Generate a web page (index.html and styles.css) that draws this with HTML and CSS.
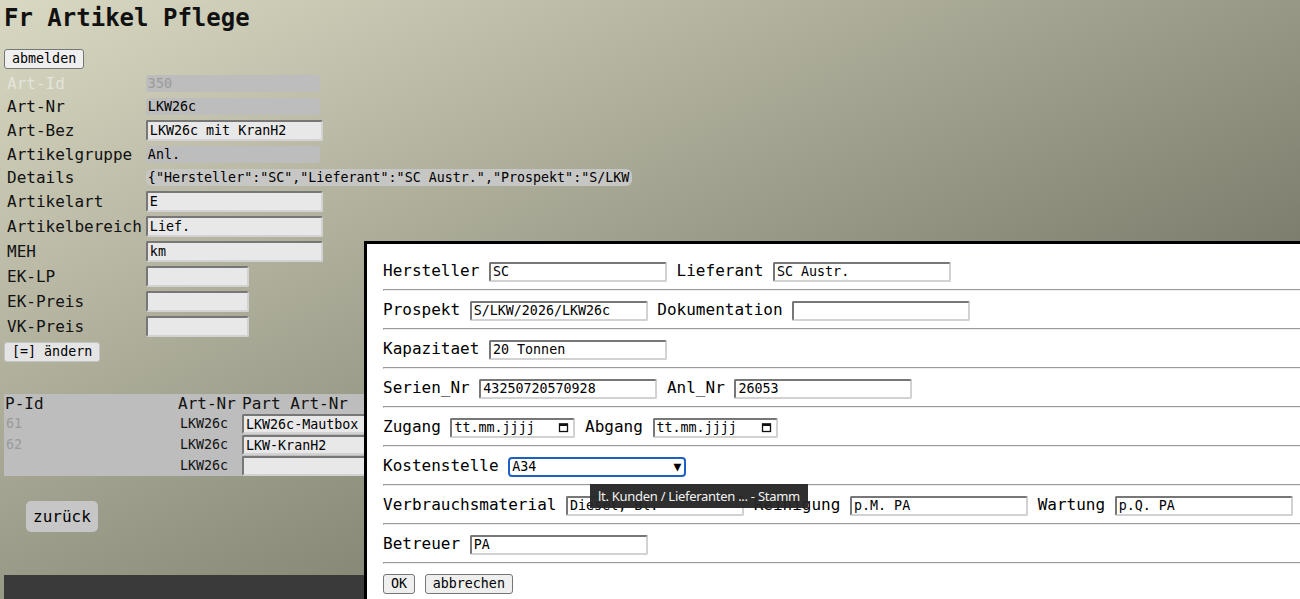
FILE: index.html
```html
<!DOCTYPE html>
<html lang="de">
<head>
    <meta charset="UTF-8">
    <meta name="viewport" content="width=device-width, initial-scale=1.0">
    <title>Fr Artikel Pflege</title>
    <link rel="stylesheet" href="styles.css">
</head>
<body>

    <h1>Fr Artikel Pflege</h1>
    <button class="btn">abmelden</button>

    <table class="form">
        <tr><td class="off">Art-Id</td><td><input class="ro dim" value="350" readonly></td></tr>
        <tr><td>Art-Nr</td><td><input class="ro" value="LKW26c" readonly></td></tr>
        <tr><td>Art-Bez</td><td><input class="edit" value="LKW26c mit KranH2"></td></tr>
        <tr><td>Artikelgruppe</td><td><input class="ro" value="Anl." readonly></td></tr>
        <tr><td>Details</td><td><input class="ro wide" value='{"Hersteller":"SC","Lieferant":"SC Austr.","Prospekt":"S/LKW/2026/LKW26c"}' readonly></td></tr>
        <tr><td>Artikelart</td><td><input class="edit" value="E"></td></tr>
        <tr><td>Artikelbereich</td><td><input class="edit" value="Lief."></td></tr>
        <tr><td>MEH</td><td><input class="edit" value="km"></td></tr>
        <tr><td>EK-LP</td><td><input class="edit short" value=""></td></tr>
        <tr><td>EK-Preis</td><td><input class="edit short" value=""></td></tr>
        <tr><td>VK-Preis</td><td><input class="edit short" value=""></td></tr>
    </table>
    <button class="btn light">[=] ändern</button>

    <!-- Stueckliste -->
    <div class="parts">
        <table>
            <tr><th class="pid">P-Id</th><th class="anr">Art-Nr</th><th>Part Art-Nr</th></tr>
            <tr><td class="id">61</td><td class="nr">LKW26c</td><td><input class="edit" value="LKW26c-Mautbox"></td></tr>
            <tr><td class="id">62</td><td class="nr">LKW26c</td><td><input class="edit" value="LKW-KranH2"></td></tr>
            <tr><td class="id"></td><td class="nr">LKW26c</td><td><input class="edit" value=""></td></tr>
        </table>
    </div>

    <button class="back">zurück</button>
    <div class="footer"></div>

    <!-- Details Dialog -->
    <div class="dialog">
        <div class="row">Hersteller <input value="SC"> Lieferant <input value="SC Austr."></div>
        <hr>
        <div class="row">Prospekt <input value="S/LKW/2026/LKW26c"> Dokumentation <input value=""></div>
        <hr>
        <div class="row">Kapazitaet <input value="20 Tonnen"></div>
        <hr>
        <div class="row">Serien_Nr <input value="43250720570928"> Anl_Nr <input value="26053"></div>
        <hr>
        <div class="row">Zugang <span class="date">tt.mm.jjjj <svg width="11" height="11" viewBox="0 0 11 11"><rect x="1.5" y="2" width="8" height="7.5" fill="none" stroke="#111" stroke-width="1.3"/><rect x="1" y="1.5" width="9" height="2.5" fill="#111"/></svg></span> Abgang <span class="date">tt.mm.jjjj <svg width="11" height="11" viewBox="0 0 11 11"><rect x="1.5" y="2" width="8" height="7.5" fill="none" stroke="#111" stroke-width="1.3"/><rect x="1" y="1.5" width="9" height="2.5" fill="#111"/></svg></span></div>
        <hr>
        <div class="row">Kostenstelle <span class="pick"><select><option>A34</option><option>A35</option></select><span class="arrow">▼</span></span></div>
        <hr>
        <div class="row">Verbrauchsmaterial <input value="Diesel, Bl."> Reinigung <input value="p.M. PA"> Wartung <input value="p.Q. PA"></div>
        <hr>
        <div class="row">Betreuer <input value="PA"></div>
        <hr>
        <div class="row"><button class="btn inl">OK</button> <button class="btn inl">abbrechen</button></div>
    </div>

    <div class="tooltip">lt. Kunden / Lieferanten ... - Stamm</div>

</body>
</html>
```

FILE: styles.css
```css
html, body {
    margin: 0;
    height: 100%;
    overflow: hidden;
}

body {
    position: relative;
    box-sizing: border-box;
    padding: 4px;
    font-family: "DejaVu Sans Mono", monospace;
    font-size: 16px;
    color: #111;
    background: linear-gradient(to bottom right, #d9d9c3, #57574a);
}

h1 {
    font-size: 24px;
    line-height: 28px;
    margin: 0 0 17px;
}

input, select, button {
    font-family: "DejaVu Sans Mono", monospace;
    font-size: 13.33px;
    color: #000;
}

.btn {
    display: block;
    height: 20px;
    padding: 0 7px;
    line-height: 16px;
    background: #efefef;
    border: 1px solid #767676;
    border-radius: 3px;
}

.btn.light {
    margin-top: 2px;
    background: #e4e4e4;
    border-color: #c4c4c4;
}

.btn.inl {
    display: inline-block;
    padding: 0 7px;
    vertical-align: middle;
}

/* Artikel Formular */
.form {
    border-spacing: 2px;
    margin-top: 2px;
}

.form td {
    padding: 1px;
    line-height: 19px;
    vertical-align: middle;
}

.form td.off {
    color: #e4e4da;
}

.ro {
    display: block;
    box-sizing: border-box;
    width: 174px;
    height: 17px;
    padding: 0 2px;
    border: none;
    border-radius: 3px;
    background: #bdbdbd;
    outline: none;
}

.ro.dim {
    color: #9a9a9a;
}

.ro.wide {
    width: 486px;
    border-radius: 6px;
    background: #c6c6c4;
}

.edit {
    display: block;
    box-sizing: border-box;
    width: 177px;
    height: 21px;
    padding: 0 2px;
    border: 2px solid;
    border-color: #777 #d2d2d2 #d2d2d2 #777;
    border-radius: 2px;
    background: #e8e8e8;
}

.edit.short {
    width: 103px;
}

/* Stueckliste */
.parts {
    width: 620px;
    height: 82px;
    margin-top: 32px;
    overflow: hidden;
    background: #bdbdbd;
}

.parts table {
    border-collapse: collapse;
}

.parts th {
    font-weight: normal;
    text-align: left;
    line-height: 19px;
    padding: 0 1px;
}

.parts th.pid {
    width: 171px;
}

.parts th.anr {
    width: 62px;
}

.parts td {
    padding: 0;
    font-size: 13.33px;
    vertical-align: middle;
}

.parts td.id {
    padding-left: 2px;
    color: #9a9a9a;
}

.parts td.nr {
    padding-left: 3px;
}

.parts td .edit {
    width: 360px;
    height: 20px;
    margin: 1px 0 0 1px;
}

.back {
    display: block;
    margin: 25px 0 0 22px;
    padding: 6px 7px;
    font-size: 16px;
    line-height: 19px;
    background: #c6c6c6;
    border: none;
    border-radius: 5px;
}

.footer {
    width: 620px;
    height: 40px;
    margin-top: 43px;
    background: #3a3a3a;
}

/* Dialog */
.dialog {
    position: absolute;
    left: 364px;
    top: 241px;
    width: 1000px;
    height: 420px;
    padding: 16px;
    border: 3px solid #000;
    background: #fff;
    color: #000;
}

.row {
    height: 21px;
    line-height: 21px;
    white-space: nowrap;
}

.dialog hr {
    margin: 8px 0;
}

.dialog input, .date {
    box-sizing: border-box;
    width: 178px;
    height: 20px;
    padding: 0 2px;
    vertical-align: middle;
    border: 2px solid;
    border-color: #777 #d2d2d2 #d2d2d2 #777;
    border-radius: 2px;
    background: #fff;
}

.date {
    display: inline-flex;
    align-items: center;
    justify-content: space-between;
    width: 125px;
    padding-right: 4px;
    font-size: 13.33px;
    line-height: 16px;
}

.pick {
    position: relative;
    display: inline-block;
    vertical-align: middle;
    height: 20px;
}

.pick select {
    appearance: none;
    box-sizing: border-box;
    width: 178px;
    height: 20px;
    padding: 0 2px;
    border: 2px solid #1f5fc4;
    border-radius: 4px;
    background: #fff;
    vertical-align: top;
}

.pick .arrow {
    position: absolute;
    right: 5px;
    top: 0;
    font-size: 13px;
    line-height: 20px;
    pointer-events: none;
}

.tooltip {
    position: absolute;
    left: 590px;
    top: 484px;
    height: 24px;
    padding: 0 8px;
    line-height: 24px;
    font-family: "Noto Sans", sans-serif;
    font-size: 13px;
    letter-spacing: -0.28px;
    color: #f2f2f2;
    background: rgba(38, 38, 38, 0.96);
    white-space: nowrap;
}
```
